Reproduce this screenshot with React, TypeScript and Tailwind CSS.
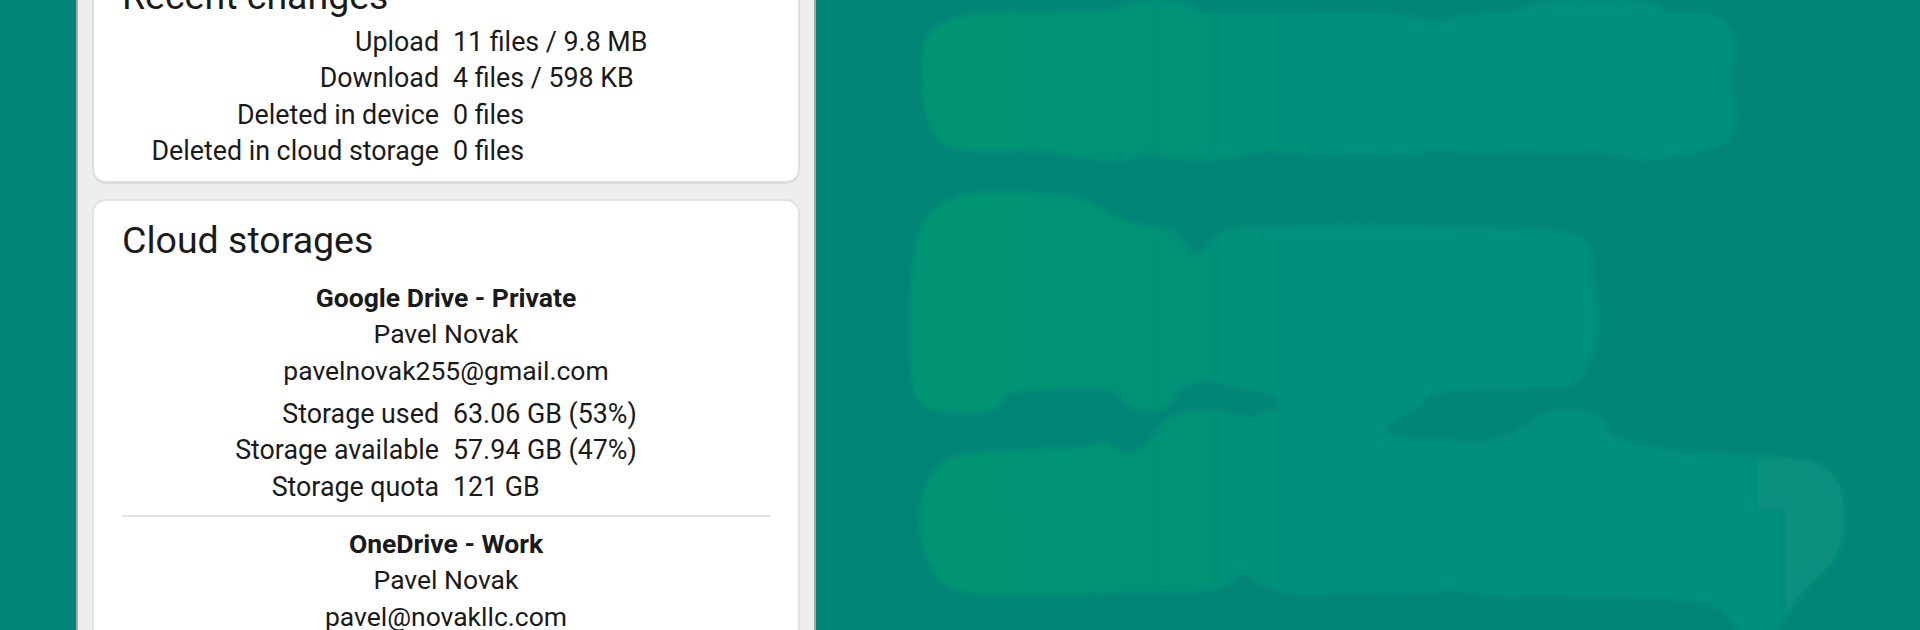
const rowLabel = "w-[317px] text-right"

// blob outlines, traced from crops of the picture (x at 1.508x, y at 3x)
const firstBlob = [[60,150],[80,80],[130,35],[360,35],[380,0],[465,0],[480,40],[590,40],[700,35],[790,40],[840,70],[880,40],[970,35],[985,0],[1170,0],[1185,45],[1210,30],[1260,40],[1295,110],[1280,250],[1295,350],[1280,430],[1230,460],[1180,480],[1130,480],[1080,450],[1040,465],[960,455],[900,465],[840,445],[790,475],[700,465],[640,465],[580,450],[530,480],[430,480],[410,460],[360,485],[300,475],[240,450],[120,460],[70,400]]
const secondBlob = [[45,300],[60,120],[110,45],[160,35],[290,40],[330,80],[380,135],[440,140],[470,210],[480,235],[510,150],[560,135],[770,130],[1040,145],[1075,190],[1075,300],[1090,450],[1060,600],[1020,630],[830,630],[820,680],[780,710],[620,710],[600,670],[590,640],[540,630],[500,595],[450,625],[440,680],[400,705],[365,670],[360,625],[190,630],[185,680],[150,700],[110,700],[60,680],[45,600]]
const thirdBlob = [[55,350],[75,220],[110,160],[240,145],[320,140],[340,120],[375,170],[410,120],[430,50],[480,20],[540,40],[560,60],[600,10],[820,10],[760,80],[770,115],[860,115],[880,130],[950,110],[985,50],[1030,20],[1085,40],[1105,120],[1200,155],[1400,170],[1445,220],[1460,350],[1445,480],[1400,560],[1370,640],[1350,700],[1290,700],[1270,600],[1000,590],[930,595],[880,570],[780,585],[700,575],[640,590],[570,560],[545,500],[530,560],[480,580],[380,575],[300,585],[120,590],[75,520]]

function smooth(raw: number[][], top: number) {
    const points = raw.map(([x, y]) => [x * 0.663 + 64, y / 3 + top])
    const mid = (a: number[], b: number[]) => `${(a[0] + b[0]) / 2} ${(a[1] + b[1]) / 2}`
    let d = `M${mid(points[points.length - 1], points[0])}`
    points.forEach((p, i) => {
        d += ` Q${p[0]} ${p[1]} ${mid(p, points[(i + 1) % points.length])}`
    })
    return d + " Z"
}

function StatRow({ label, value }: { label: string; value: string }) {
    return (
        <div className="flex gap-[14px] h-[36.3px] leading-[36.3px] text-[26.8px]">
            <div className={rowLabel}>{label}</div>
            <div>{value}</div>
        </div>
    )
}

function Account({ title, name, mail }: { title: string; name: string; mail: string }) {
    return (
        <div className="text-center leading-[36.3px]">
            <div className="font-bold h-[36.3px]">{title}</div>
            <div className="h-[36.3px]">{name}</div>
            <div className="h-[36.3px]">{mail}</div>
        </div>
    )
}

function Blob({ points, top }: { points: number[][]; top: number }) {
    const d = smooth(points, top)
    return (
        <g filter="url(#soft)">
            <path d={d} fill="url(#blob)" />
            <path d={d} fill="url(#dither)" />
        </g>
    )
}

function Blobs() {
    return (
        <svg className="w-full h-full block" viewBox="0 0 1104 630">
            <defs>
                <linearGradient id="blob" gradientUnits="userSpaceOnUse" x1="100" y1="0" x2="1000" y2="0">
                    <stop offset="0" stopColor="#059572" />
                    <stop offset="0.25" stopColor="#059275" />
                    <stop offset="0.45" stopColor="#068f7b" />
                    <stop offset="1" stopColor="#078f7e" />
                </linearGradient>
                <pattern id="dither" patternUnits="userSpaceOnUse" width="4" height="4">
                    <path d="M0 0H4M0 0V4" stroke="#018577" strokeOpacity="0.2" strokeWidth="1" fill="none" />
                </pattern>
                <filter id="soft" x="-5%" y="-5%" width="110%" height="110%">
                    <feGaussianBlur stdDeviation="2" />
                </filter>
            </defs>
            <Blob points={firstBlob} top={0} />
            <Blob points={secondBlob} top={180} />
            <Blob points={thirdBlob} top={400} />
        </svg>
    )
}

export default function App() {
    return (
        <div className="flex h-[630px] w-[1920px] overflow-hidden bg-[#018577] text-[#1a1a1a] text-[26.5px] font-['Roboto',sans-serif]">
            <div className="w-[76px] shrink-0" />
            <div className="w-[740px] shrink-0 bg-[#eeeeee] border-x-2 border-x-[#a6a6a6] px-[14px]">
                <div className="-mt-[28px] rounded-[14px] bg-white border-b-[3px] border-x-[2px] border-[#dedede] px-[28px] pb-[12px]">
                    <h2 className="text-[37.5px] leading-[48px] mb-[4px] h-[48px]">Recent changes</h2>
                    <StatRow label="Upload" value="11 files / 9.8 MB" />
                    <StatRow label="Download" value="4 files / 598 KB" />
                    <StatRow label="Deleted in device" value="0 files" />
                    <StatRow label="Deleted in cloud storage" value="0 files" />
                </div>
                <div className="mt-[15px] rounded-t-[14px] h-[500px] bg-white border-x-[2px] border-t-[2px] border-[#e2e2e2] px-[28px] pt-[15px]">
                    <h2 className="text-[37.5px] leading-[48px] mb-[16px]">Cloud storages</h2>
                    <Account title="Google Drive - Private" name="Pavel Novak" mail="pavelnovak255@gmail.com" />
                    <div className="mt-[7px]">
                        <StatRow label="Storage used" value="63.06 GB (53%)" />
                        <StatRow label="Storage available" value="57.94 GB (47%)" />
                        <StatRow label="Storage quota" value="121 GB" />
                    </div>
                    <div className="h-[2px] bg-[#e2e2e2] mt-[10px] mb-[9px]" />
                    <Account title="OneDrive - Work" name="Pavel Novak" mail="pavel@novakllc.com" />
                </div>
            </div>
            <div className="flex-1 min-w-0">
                <Blobs />
            </div>
        </div>
    )
}
